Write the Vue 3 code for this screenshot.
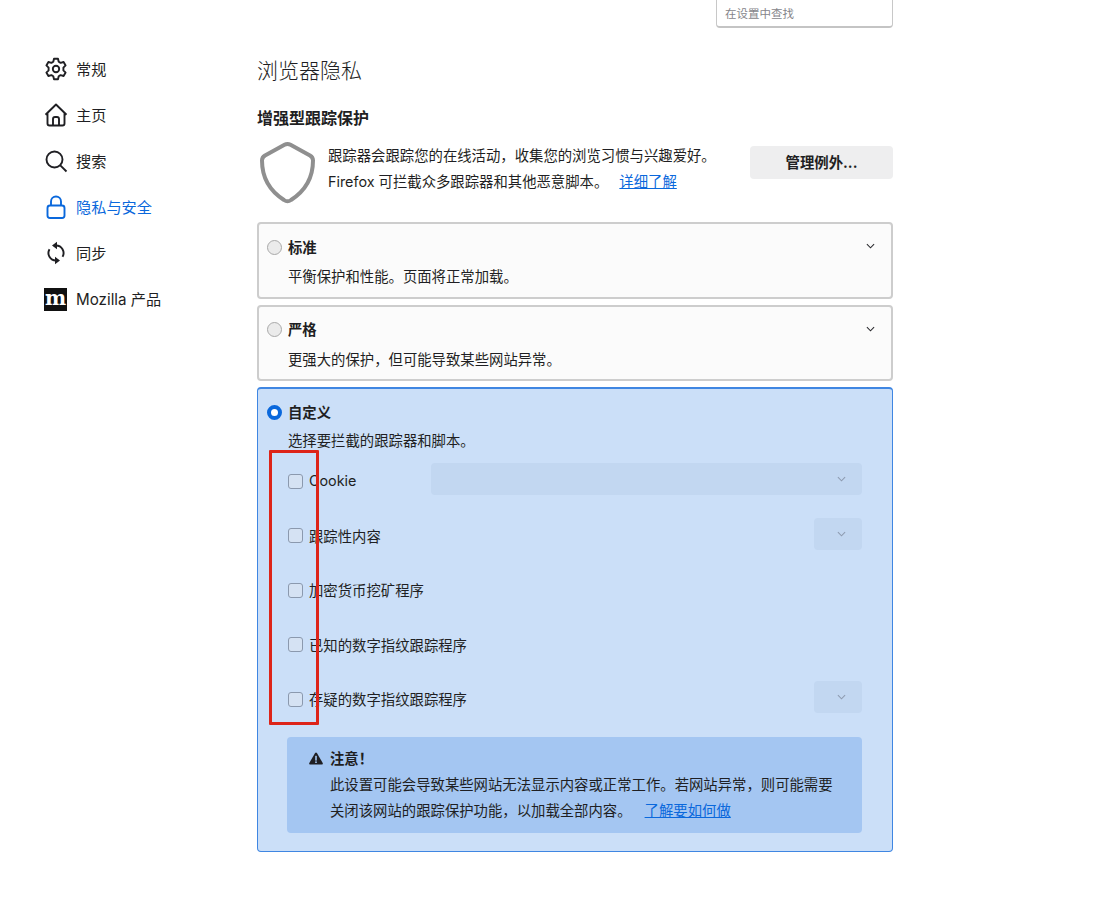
<template>
  <div class="page">
    <nav class="sidebar">
      <div v-for="item in navItems" :key="item.label" class="nav-item" :class="{ active: item.active }">
        <svg v-if="item.icon === 'gear'" class="nav-icon" viewBox="0 0 24 24">
          <path d="M10 1.800h4l.7 3 1.900 1.100 3-.9 2 3.400-2.200 2.200v2.800l2.200 2.200-2 3.400-3-.9-1.900 1.100-.7 3h-4l-.7-3-1.900-1.100-3 .9-2-3.400 2.200-2.200v-2.800L2.400 8.400l2-3.400 3 .9 1.900-1.100z" />
          <circle cx="12" cy="12" r="3.200" />
        </svg>
        <svg v-else-if="item.icon === 'home'" class="nav-icon" viewBox="0 0 24 24">
          <path d="M1.500 11.800 12 1.500l10.500 10.300M3.500 10v10.500a2 2 0 0 0 2 2h13a2 2 0 0 0 2-2V10" />
          <path d="M9 22.500V16a2 2 0 0 1 2-2h2a2 2 0 0 1 2 2v6.500" />
        </svg>
        <svg v-else-if="item.icon === 'search'" class="nav-icon" viewBox="0 0 24 24">
          <circle cx="10.500" cy="10.500" r="8" />
          <path d="m16.300 16.300 6.200 6.200" />
        </svg>
        <svg v-else-if="item.icon === 'lock'" class="nav-icon" viewBox="0 0 24 24">
          <rect x="3.500" y="10.500" width="17" height="12.500" rx="2.500" />
          <path d="M7 10.500V6.500a5 5 0 0 1 10 0v4" />
        </svg>
        <svg v-else-if="item.icon === 'sync'" class="nav-icon" viewBox="0 0 24 24">
          <path d="M12 4.500A7.500 7.500 0 0 1 18.500 15.800" />
          <path d="M12 19.500A7.500 7.500 0 0 1 5.500 8.200" />
          <path class="solid" d="M8 4.500 13 .8v7.400zM16 19.500 11 15.800v7.400z" />
        </svg>
        <span v-else class="moz-logo">m</span>
        <span class="nav-label">{{ item.label }}</span>
      </div>
    </nav>

    <main class="content">
      <div class="search-row">
        <div class="search-box">在设置中查找</div>
      </div>

      <h1 class="title">浏览器隐私</h1>
      <h2 class="subtitle">增强型跟踪保护</h2>

      <div class="intro">
        <svg class="shield" viewBox="0 0 59 64">
          <path d="M26.500 3.800a6 6 0 0 1 6 0L52 14.500c2 1.200 3 3 3 5C55 36 47 50 33 59a6 6 0 0 1-7 0C12 50 4 36 4 19.500c0-2 1-3.800 3-5z" />
        </svg>
        <div class="intro-text">
          <p>跟踪器会跟踪您的在线活动，收集您的浏览习惯与兴趣爱好。</p>
          <p>Firefox 可拦截众多跟踪器和其他恶意脚本。 <a class="link">详细了解</a></p>
        </div>
        <button class="manage-btn">管理例外...</button>
      </div>

      <section v-for="level in levels" :key="level.name" class="card">
        <div class="card-head">
          <span class="radio"></span>
          <strong>{{ level.name }}</strong>
          <svg class="chevron" viewBox="0 0 10 6"><path d="m1 1 4 4 4-4" /></svg>
        </div>
        <p class="card-desc">{{ level.desc }}</p>
      </section>

      <section class="card custom">
        <div class="card-head">
          <span class="radio checked"></span>
          <strong>自定义</strong>
        </div>
        <p class="card-desc">选择要拦截的跟踪器和脚本。</p>

        <div class="trackers">
          <div v-for="row in trackers" :key="row.label" class="tracker">
            <span class="checkbox"></span>
            <span class="tracker-label">{{ row.label }}</span>
            <div v-if="row.select" class="select" :class="row.select">
              <svg class="chevron dim" viewBox="0 0 10 6"><path d="m1 1 4 4 4-4" /></svg>
            </div>
          </div>
          <div class="red-mark"></div>
        </div>

        <div class="warning">
          <div class="warning-head">
            <svg class="warn-icon" viewBox="0 0 14 13">
              <path d="M7 .5c.4 0 .7.2.9.5l5.800 10c.4.7-.1 1.500-.9 1.500H1.200c-.8 0-1.300-.8-.9-1.500L6.100 1c.2-.3.5-.5.9-.5z" />
              <rect class="mark" x="6.200" y="3.800" width="1.600" height="4.800" />
              <rect class="mark" x="6.200" y="9.400" width="1.600" height="1.600" />
            </svg>
            <strong>注意！</strong>
          </div>
          <p>此设置可能会导致某些网站无法显示内容或正常工作。若网站异常，则可能需要</p>
          <p>关闭该网站的跟踪保护功能，以加载全部内容。 <a class="link wide-gap">了解要如何做</a></p>
        </div>
      </section>
    </main>
  </div>
</template>

<script setup>
const navItems = [
  { label: '常规', icon: 'gear' },
  { label: '主页', icon: 'home' },
  { label: '搜索', icon: 'search' },
  { label: '隐私与安全', icon: 'lock', active: true },
  { label: '同步', icon: 'sync' },
  { label: 'Mozilla 产品', icon: 'moz' }
]

const levels = [
  { name: '标准', desc: '平衡保护和性能。页面将正常加载。' },
  { name: '严格', desc: '更强大的保护，但可能导致某些网站异常。' }
]

const trackers = [
  { label: 'Cookie', select: 'wide' },
  { label: '跟踪性内容', select: 'small' },
  { label: '加密货币挖矿程序' },
  { label: '已知的数字指纹跟踪程序' },
  { label: '存疑的数字指纹跟踪程序', select: 'small' }
]
</script>

<style>
body {
  background: #fff;
}
</style>

<style scoped>
.page {
  display: flex;
  width: 1098px;
  height: 900px;
  padding-left: 44px;
  box-sizing: border-box;
  font-family: Inter, "Noto Sans CJK SC", sans-serif;
  font-size: 14.37px;
  color: #1f1f23;
  overflow: hidden;
}

p {
  margin: 0;
}

/* sidebar */
.sidebar {
  width: 213px;
  flex: none;
  padding-top: 46px;
}

.nav-item {
  display: flex;
  align-items: center;
  gap: 8px;
  height: 46px;
  font-size: 15.2px;
}

.nav-item.active {
  color: #0a68dc;
}

.nav-label {
  margin-bottom: 2px;
}

.nav-icon {
  width: 24px;
  height: 24px;
  flex: none;
  fill: none;
  stroke: currentColor;
  stroke-width: 1.900;
  stroke-linejoin: round;
}

.nav-icon .solid {
  fill: currentColor;
  stroke: none;
}

.moz-logo {
  width: 23px;
  height: 23px;
  flex: none;
  margin-right: 1px;
  background: #111;
  color: #fff;
  font-family: "DejaVu Serif", serif;
  font-weight: 700;
  font-size: 20px;
  line-height: 20px;
  text-align: center;
}

/* main column */
.content {
  width: 636px;
  flex: none;
  position: relative;
}

.search-row {
  display: flex;
  justify-content: flex-end;
  height: 28px;
}

.search-box {
  width: 177px;
  height: 28px;
  box-sizing: border-box;
  padding: 5px 8px 0;
  border: 1px solid #c8c8c8;
  border-top: none;
  border-bottom: 2px solid #c4c4c4;
  border-radius: 0 0 4px 4px;
  font-size: 11.500px;
  color: #85858a;
}

.title {
  margin: 28px 0 0;
  font-size: 21px;
  font-weight: 300;
  line-height: 30px;
}

.subtitle {
  margin: 20px 0 0;
  font-size: 16px;
  font-weight: 700;
  line-height: 24px;
}

.intro {
  display: flex;
  margin-top: 8px;
  height: 78px;
  margin-bottom: 6px;
}

.shield {
  width: 59px;
  height: 64px;
  flex: none;
  margin: 3px 11px 0 1px;
  fill: none;
  stroke: #8f8f8f;
  stroke-width: 4;
  stroke-linejoin: round;
}

.intro-text {
  flex: 1;
  padding-top: 5px;
  line-height: 26px;
}

.link {
  margin-left: 7px;
  color: #0a68dc;
  text-decoration: underline;
}

.link.wide-gap {
  margin-left: 9px;
}

.manage-btn {
  width: 143px;
  height: 33px;
  margin-top: 8px;
  padding: 0 0 2px;
  flex: none;
  border: none;
  border-radius: 4px;
  background: #eeeeef;
  color: #1f1f23;
  font: 700 14.400px Inter, "Noto Sans CJK SC", sans-serif;
}

/* cards */
.card {
  height: 76.500px;
  box-sizing: border-box;
  margin-bottom: 6px;
  padding: 12px 16px 0 8px;
  border: 2px solid #cdcdcd;
  border-radius: 4px;
  background: #fbfbfb;
}

.card-head {
  display: flex;
  align-items: center;
  height: 22px;
}

.card-head strong {
  margin: 0 0 2px 6px;
}

.card-desc {
  margin-top: 8px;
  padding-left: 21px;
  line-height: 22px;
}

.radio {
  width: 15px;
  height: 15px;
  box-sizing: border-box;
  border: 1px solid #a9a9a9;
  border-radius: 50%;
  background: #ebebeb;
}

.radio.checked {
  border: 4px solid #0a68dc;
  background: #fff;
}

.chevron {
  width: 9px;
  height: 6px;
  margin: 0 0 2px auto;
  fill: none;
  stroke: #2a2a2e;
  stroke-width: 1.200;
}

.chevron.dim {
  margin-bottom: 0;
  stroke: #8e9bb0;
}

.custom {
  height: 465px;
  margin: 0;
  border: 1px solid #3f86e2;
  border-top-width: 2px;
  background: #cbdff8;
  padding: 12px 30px 0 9px;
}

.custom .card-desc {
  margin-top: 7px;
}

/* tracker rows */
.trackers {
  position: relative;
  margin-top: 2px;
  padding-left: 21px;
}

.tracker {
  display: flex;
  align-items: center;
  height: 54.500px;
}

.checkbox {
  width: 15px;
  height: 15px;
  flex: none;
  box-sizing: border-box;
  border: 1px solid #8b99ae;
  border-radius: 3px;
  background: #d5e2f3;
}

.tracker-label {
  margin: 0 0 1px 6px;
}

.select {
  display: flex;
  align-items: center;
  height: 32px;
  margin: 0 0 4px auto;
  box-sizing: border-box;
  padding-right: 16px;
  border-radius: 4px;
  background: #c2d7f1;
}

.select.wide {
  width: 431px;
}

.select.small {
  width: 48px;
}

.red-mark {
  position: absolute;
  left: 2px;
  top: -4px;
  width: 50px;
  height: 275px;
  box-sizing: border-box;
  border: 3px solid #dd2419;
  border-radius: 1px;
}

/* warning */
.warning {
  margin: 10px 0 0 20px;
  height: 96px;
  box-sizing: border-box;
  padding: 9px 20px 0 43px;
  border-radius: 4px;
  background: #a4c6f2;
  line-height: 26px;
}

.warning-head {
  position: relative;
  height: 26px;
}

.warn-icon {
  position: absolute;
  left: -21px;
  top: 6px;
  width: 14px;
  height: 13px;
  fill: #1f1f23;
}

.warn-icon .mark {
  fill: #a4c6f2;
}
</style>
